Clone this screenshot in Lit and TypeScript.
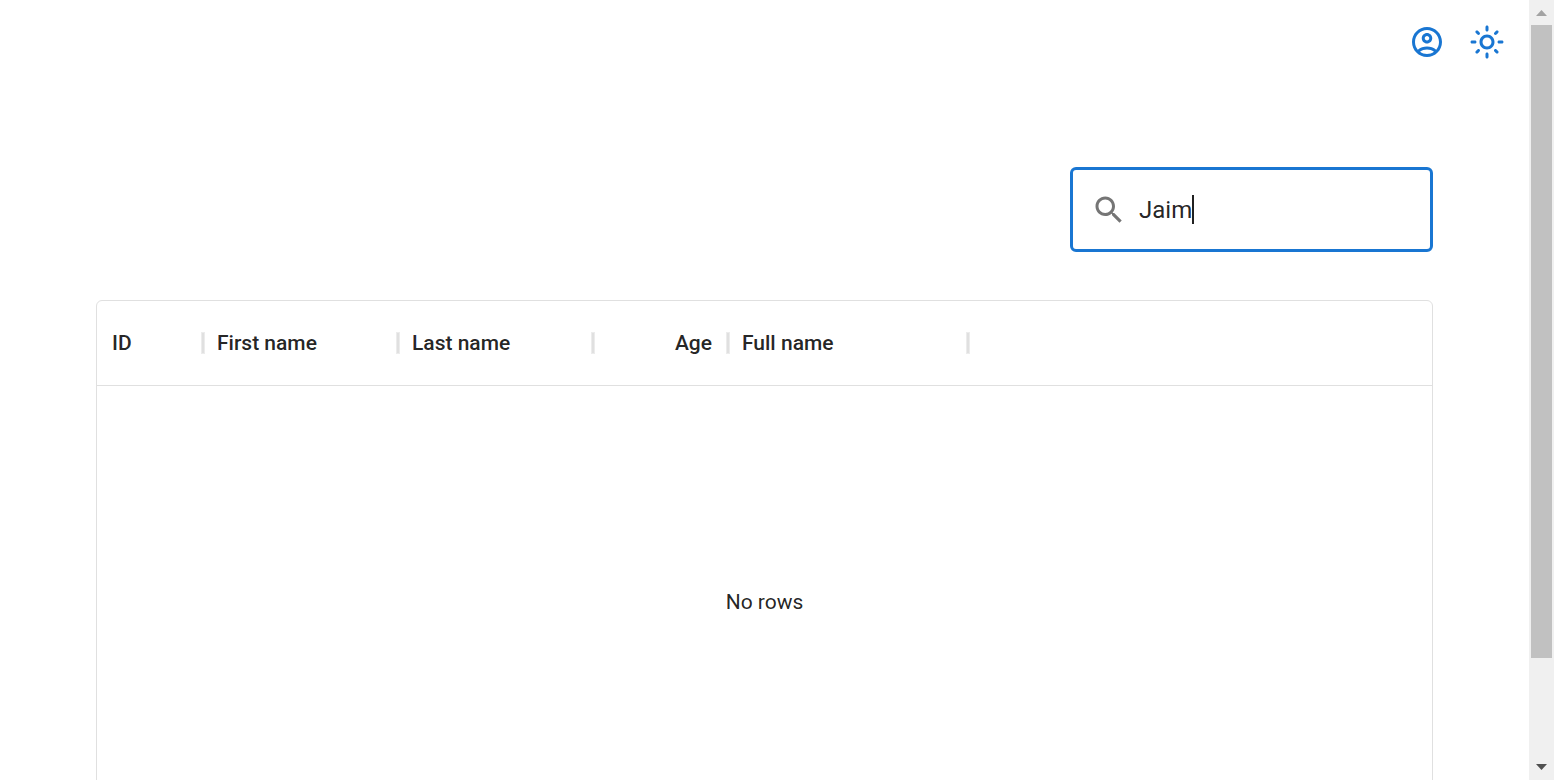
import { LitElement, html, css } from "lit";
import { customElement, property, state } from "lit/decorators.js";
import { classMap } from "lit/directives/class-map.js";

interface Column {
  field: string;
  label: string;
  width: number;
  numeric?: boolean;
}

const COLUMNS: Column[] = [
  { field: "id", label: "ID", width: 105 },
  { field: "firstName", label: "First name", width: 195 },
  { field: "lastName", label: "Last name", width: 195 },
  { field: "age", label: "Age", width: 135, numeric: true },
  { field: "fullName", label: "Full name", width: 240 },
];

@customElement("top-actions")
export class TopActions extends LitElement {
  static styles = css`
    :host {
      display: flex;
      justify-content: flex-end;
      padding: 12px;
    }
    .icon-button {
      display: flex;
      padding: 12px;
      border: 0;
      border-radius: 50%;
      background: none;
      color: #1976d2;
      cursor: pointer;
    }
    .icon {
      width: 36px;
      height: 36px;
      fill: currentColor;
    }
  `;

  render() {
    return html`
      <button class="icon-button" type="button" aria-label="Account">
        <svg class="icon" viewBox="0 0 24 24" aria-hidden="true">
          <path
            d="M12 2C6.48 2 2 6.48 2 12s4.48 10 10 10 10-4.48 10-10S17.52 2 12 2zM7.35 18.5C8.66 17.56 10.26 17 12 17s3.34.56 4.65 1.5C15.34 19.44 13.74 20 12 20s-3.34-.56-4.65-1.5zm10.79-1.38C16.45 15.8 14.32 15 12 15s-4.45.8-6.14 2.12C4.7 15.73 4 13.95 4 12c0-4.42 3.58-8 8-8s8 3.58 8 8c0 1.95-.7 3.73-1.86 5.12zM12 6c-1.93 0-3.5 1.57-3.5 3.5S10.07 13 12 13s3.5-1.57 3.5-3.5S13.93 6 12 6zm0 5c-.83 0-1.5-.67-1.5-1.5S11.17 8 12 8s1.5.67 1.5 1.5S12.83 11 12 11z"
          />
        </svg>
      </button>
      <button class="icon-button" type="button" aria-label="Toggle theme">
        <svg class="icon" viewBox="0 0 24 24" aria-hidden="true">
          <path
            d="M12 9c1.65 0 3 1.35 3 3s-1.35 3-3 3-3-1.35-3-3 1.35-3 3-3m0-2c-2.76 0-5 2.24-5 5s2.24 5 5 5 5-2.24 5-5-2.24-5-5-5zM2 13h2c.55 0 1-.45 1-1s-.45-1-1-1H2c-.55 0-1 .45-1 1s.45 1 1 1zm18 0h2c.55 0 1-.45 1-1s-.45-1-1-1h-2c-.55 0-1 .45-1 1s.45 1 1 1zM11 2v2c0 .55.45 1 1 1s1-.45 1-1V2c0-.55-.45-1-1-1s-1 .45-1 1zm0 18v2c0 .55.45 1 1 1s1-.45 1-1v-2c0-.55-.45-1-1-1s-1 .45-1 1zM5.99 4.58c-.39-.39-1.03-.39-1.41 0-.39.39-.39 1.03 0 1.41l1.06 1.06c.39.39 1.03.39 1.41 0s.39-1.03 0-1.41L5.99 4.58zm12.37 12.37c-.39-.39-1.03-.39-1.41 0-.39.39-.39 1.03 0 1.41l1.06 1.06c.39.39 1.03.39 1.41 0 .39-.39.39-1.03 0-1.41l-1.06-1.06zm1.06-10.96c.39-.39.39-1.03 0-1.41-.39-.39-1.03-.39-1.41 0l-1.06 1.06c-.39.39-.39 1.03 0 1.41s1.03.39 1.41 0l1.06-1.06zM7.05 18.36c.39-.39.39-1.03 0-1.41-.39-.39-1.03-.39-1.41 0l-1.06 1.06c-.39.39-.39 1.03 0 1.41s1.03.39 1.41 0l1.06-1.06z"
          />
        </svg>
      </button>
    `;
  }
}

@customElement("search-field")
export class SearchField extends LitElement {
  @property() value = "";

  static styles = css`
    :host {
      display: block;
    }
    .box {
      display: flex;
      align-items: center;
      gap: 12px;
      padding: 21px 18px;
      border: 3px solid #1976d2;
      border-radius: 6px;
      cursor: text;
    }
    .icon {
      flex: none;
      width: 36px;
      height: 36px;
      fill: rgba(0, 0, 0, 0.54);
    }
    .entry {
      display: flex;
      align-items: center;
      flex: 1;
      min-width: 0;
    }
    .input {
      field-sizing: content;
      min-width: 0;
      max-width: 100%;
      height: 37px;
      padding: 0;
      border: 0;
      outline: 0;
      background: none;
      color: rgba(0, 0, 0, 0.87);
      font: 400 24px/36px Roboto, sans-serif;
      caret-color: transparent;
    }
    .caret {
      flex: none;
      width: 2px;
      height: 29px;
      background: rgba(0, 0, 0, 0.87);
    }
  `;

  render() {
    return html`
      <label class="box">
        <svg class="icon" viewBox="0 0 24 24" aria-hidden="true">
          <path
            d="M15.5 14h-.79l-.28-.27C15.41 12.59 16 11.11 16 9.5 16 5.91 13.09 3 9.5 3S3 5.91 3 9.5 5.91 16 9.5 16c1.61 0 3.09-.59 4.23-1.57l.27.28v.79l5 4.99L20.49 19l-4.99-5zm-6 0C7.01 14 5 11.99 5 9.5S7.01 5 9.5 5 14 7.01 14 9.5 11.99 14 9.5 14z"
          />
        </svg>
        <span class="entry">
          <input class="input" type="text" aria-label="Search" .value=${this.value} />
          <span class="caret"></span>
        </span>
      </label>
    `;
  }
}

@customElement("data-grid")
export class DataGrid extends LitElement {
  @property({ attribute: false }) columns: Column[] = [];

  static styles = css`
    :host {
      display: block;
      box-sizing: border-box;
      min-height: 600px;
      border: 1px solid #e0e0e0;
      border-radius: 6px;
    }
    .table {
      width: 100%;
      table-layout: fixed;
      border-collapse: separate;
      border-spacing: 0;
    }
    .head {
      position: relative;
      box-sizing: border-box;
      height: 85px;
      padding: 0 15px;
      border-bottom: 1px solid #e0e0e0;
      font-size: 21px;
      font-weight: 500;
      line-height: 30px;
      text-align: left;
      white-space: nowrap;
    }
    .numeric {
      text-align: right;
    }
    .separator {
      position: absolute;
      top: 31px;
      right: -3px;
      z-index: 1;
      box-sizing: border-box;
      width: 4px;
      height: 22px;
      border: 1px solid #ececec;
      background: #e0e0e0;
    }
    .empty {
      height: 432px;
      padding: 0;
      font-size: 21px;
      line-height: 30px;
      text-align: center;
      vertical-align: middle;
    }
  `;

  render() {
    return html`
      <table class="table">
        <colgroup>
          ${this.columns.map((c) => html`<col style="width:${c.width}px" />`)}
          <col />
        </colgroup>
        <thead>
          <tr>
            ${this.columns.map(
              (c) => html`<th scope="col" class=${classMap({ head: true, numeric: !!c.numeric })}>
                ${c.label}<span class="separator"></span>
              </th>`
            )}
            <td class="head"></td>
          </tr>
        </thead>
        <tbody>
          <tr>
            <td class="empty" colspan=${this.columns.length + 1}>No rows</td>
          </tr>
        </tbody>
      </table>
    `;
  }
}

@customElement("scroll-rail")
export class ScrollRail extends LitElement {
  static styles = css`
    :host {
      display: flex;
      flex-direction: column;
      width: 25px;
      background: #f0f0f0;
    }
    .arrow {
      display: flex;
      flex: none;
      height: 25px;
      padding: 0;
      border: 0;
      background: none;
      color: #505050;
    }
    .muted {
      color: #a3a3a3;
    }
    .glyph {
      width: 25px;
      height: 25px;
      fill: currentColor;
    }
    .track {
      flex: 1;
      padding: 0 2px;
    }
    .thumb {
      height: 86.7%;
      background: #c1c1c1;
    }
  `;

  render() {
    return html`
      <button class="arrow muted" type="button" aria-label="Scroll up" tabindex="-1">
        <svg class="glyph" viewBox="0 0 25 25"><path d="M7 16h11l-5.500-6z" /></svg>
      </button>
      <div class="track"><div class="thumb"></div></div>
      <button class="arrow" type="button" aria-label="Scroll down" tabindex="-1">
        <svg class="glyph" viewBox="0 0 25 25"><path d="M7 9h11l-5.500 6z" /></svg>
      </button>
    `;
  }
}

@customElement("app-root")
export class AppRoot extends LitElement {
  @state() private query = "Jaim";

  static styles = css`
    :host {
      display: flex;
      height: 100vh;
      overflow: hidden;
      background: #fff;
      color: rgba(0, 0, 0, 0.87);
      font-family: Roboto, sans-serif;
    }
    .page {
      flex: 1;
      min-width: 0;
      overflow: hidden;
    }
    .content {
      display: flex;
      flex-direction: column;
      gap: 48px;
      padding: 83px 96px 48px;
    }
    .search {
      align-self: flex-end;
      width: 363px;
      max-width: 100%;
    }
  `;

  render() {
    return html`
      <div class="page">
        <top-actions></top-actions>
        <main class="content">
          <search-field class="search" .value=${this.query}></search-field>
          <data-grid .columns=${COLUMNS}></data-grid>
        </main>
      </div>
      <scroll-rail></scroll-rail>
    `;
  }
}
